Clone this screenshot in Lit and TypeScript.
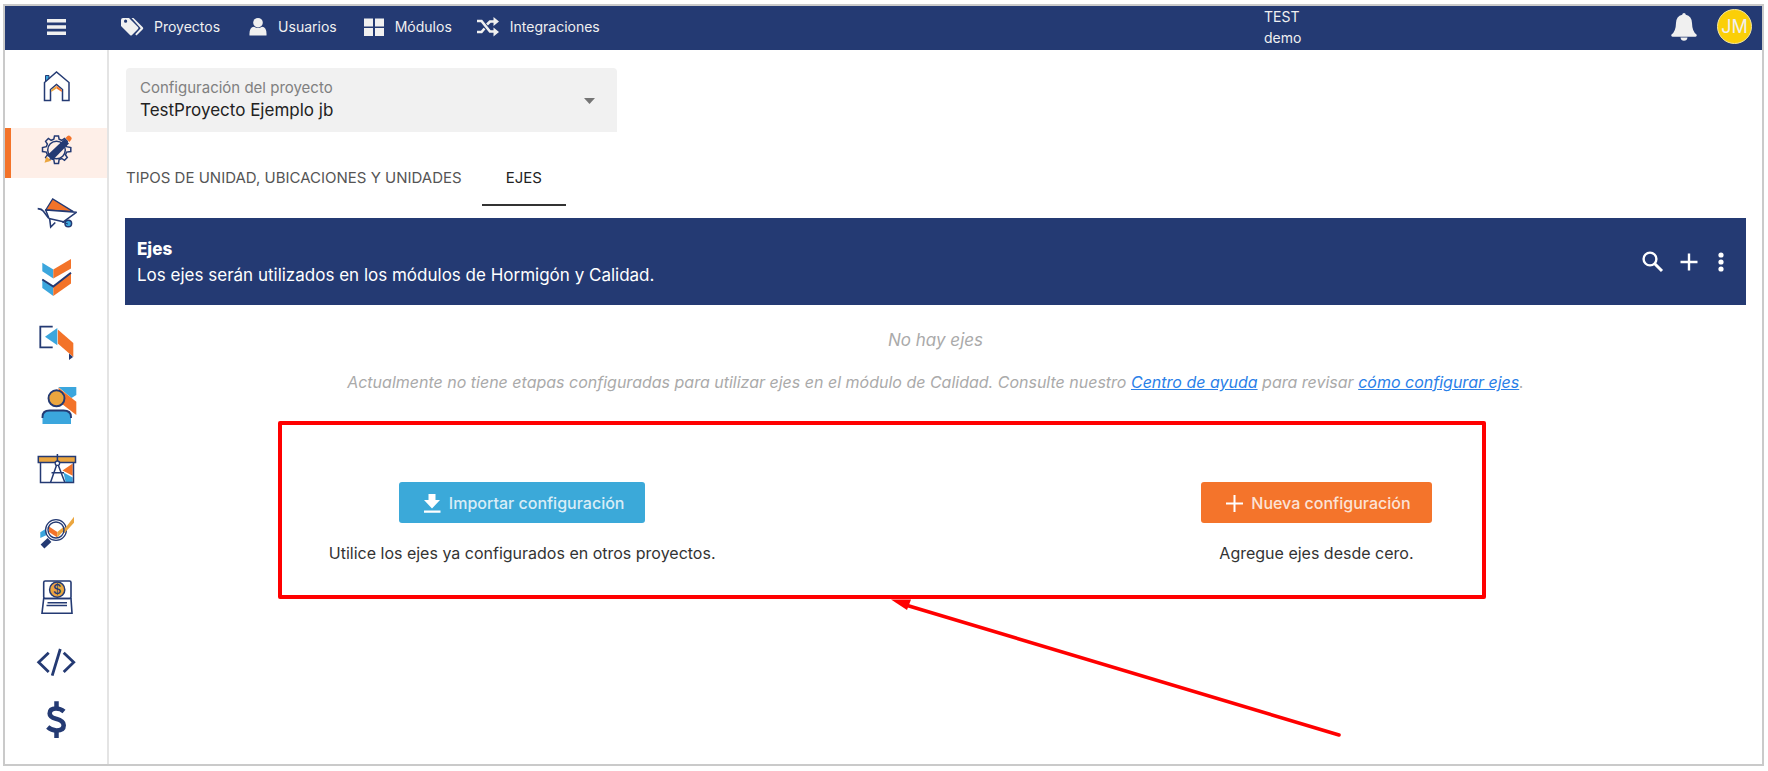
import { LitElement, html, css, svg } from "lit";
import { customElement, state } from "lit/decorators.js";
import { classMap } from "lit/directives/class-map.js";

const NAVY = "#243a73";
const ORANGE = "#f37329";
const BLUE = "#3ba6dd";
const AMBER = "#eba63f";

const modules = [
  {
    name: "Inicio",
    art: svg`
      <path d="M11.500 19V11.500h3.500V16" fill=${BLUE} stroke=${NAVY}/>
      <path d="M10.500 36.500V18.500L22.500 8l12.500 10.500v18h-6.500V25.500L22.500 20.500l-6 5v11z" fill="#fff" stroke=${NAVY} stroke-width="1.500"/>
      <path d="M17.200 26v2l5.300-3.500V21.500z" fill=${AMBER}/>
      <path d="M27.800 26v2l-5.300-3.500V21.500z" fill=${ORANGE}/>`,
  },
  {
    name: "Configuración",
    art: svg`
      <path d="M20.500 8h4l.6 3.200 2.700 1.100 2.700-1.800 2.800 2.800-1.800 2.700 1.100 2.700 4.200.8v4l-4.200.6-1.100 2.700 1.800 2.700-2.800 2.800-2.700-1.800-2.700 1.100-.6 4h-4l-.7-4-2.700-1.100-2.700 1.800-2.800-2.800 1.800-2.700-1.100-2.700-3.800-.6v-4l3.800-.8 1.100-2.700-1.800-2.700 2.800-2.800 2.700 1.800 2.700-1.100z" fill="none" stroke=${NAVY} stroke-width="1.500"/>
      <circle cx="22.500" cy="22" r="8.800" fill="#feefe8" stroke=${NAVY} stroke-width="1.500"/>
      <path d="M30.500 11l4.500 4.500-16.500 16.800-5.500-4.800z" fill=${NAVY}/>
      <path d="M31.500 10l2-2q1.600-1 3 .5l.8.8q1 1.500-.3 2.800l-1.600 1.800z" fill=${ORANGE}/>
      <path d="M12.400 28.500l4.800 4.200-6.700 2z" fill=${AMBER}/>`,
  },
  {
    name: "Hormigón",
    art: svg`
      <path d="M11.700 18L18.700 7l20.600 12.600z" fill=${ORANGE} stroke=${NAVY} stroke-width="1.300"/>
      <path d="M11.700 18l30.600 2.300-13 9.500L15 26.500z" fill="#fff" stroke=${NAVY} stroke-width="1.500" stroke-linejoin="round"/>
      <path d="M3.700 16.600q4 .3 5.500 2.400l5.300 7M15.700 27l1 8 4.600-4.500" fill="none" stroke=${NAVY} stroke-width="1.600"/>
      <circle cx="34.300" cy="31.500" r="3.300" fill=${BLUE} stroke=${NAVY} stroke-width="1.500"/>
      <path d="M28 30l6 2" stroke=${NAVY}/>`,
  },
  {
    name: "Calidad",
    art: svg`
      <path d="M8.300 6.700l11 6.900v8.900l-11-7.200z" fill=${BLUE}/>
      <path d="M37 3v9.500L19.300 22.500v-8.900z" fill=${ORANGE}/>
      <path d="M8.300 23l11 8v9l-11-8z" fill=${BLUE}/>
      <path d="M37 17v10.500L19.300 40v-9z" fill=${ORANGE}/>
      <path d="M8.300 23.500l11 7 17.700-13.700" fill="none" stroke=${NAVY} stroke-width="2"/>`,
  },
  {
    name: "Accesos",
    art: svg`
      <path d="M18.700 6.700H6.300v20.600h12.400" fill="none" stroke=${NAVY} stroke-width="1.800"/>
      <path d="M11 16.700L23.300 8v17.300z" fill=${BLUE}/>
      <path d="M23.800 9.500l15.500 13.500v14L23.800 23.500z" fill=${ORANGE}/>
      <path d="M35 33.500l4 3.500-4 3z" fill=${NAVY}/>`,
  },
  {
    name: "Personal",
    art: svg`
      <path d="M24.300 3h18v8L37.500 14z" fill=${BLUE}/>
      <path d="M24.300 3.500l18 14.200V31L28 20z" fill=${ORANGE}/>
      <circle cx="22.500" cy="14.300" r="8" fill=${AMBER} stroke=${NAVY} stroke-width="1.900"/>
      <path d="M8.500 40v-7q0-6.500 7-6.500h14q7.500 0 7.500 6.500v7z" fill=${BLUE}/>
      <path d="M8.500 34v-1q0-6.500 7-6.500h14q7.500 0 7.500 6.500v1" fill="none" stroke=${NAVY} stroke-width="1.900"/>`,
  },
  {
    name: "Planos",
    art: svg`
      <path d="M38.700 15.500v12.200L28.500 22.500z" fill=${ORANGE}/>
      <path d="M29.500 24.500l9.200 5v5h-7z" fill=${BLUE}/>
      <path d="M6.500 14v20.500h33V14" fill="none" stroke=${NAVY} stroke-width="1.500"/>
      <path d="M4.300 8.500h37.200v6H4.300z" fill=${AMBER} stroke=${NAVY} stroke-width="1.500"/>
      <path d="M23.400 6v7M22.600 17l-6 17.300M24.200 17l6.600 17.300M17.500 24.700h12.500" stroke=${NAVY} stroke-width="1.500"/>
      <circle cx="23.400" cy="15.200" r="2.200" fill="#fff" stroke=${NAVY} stroke-width="1.300"/>`,
  },
  {
    name: "Análisis",
    art: svg`
      <path d="M6.300 20.300l8-5v7l-8 3.700z" fill=${BLUE}/>
      <circle cx="22" cy="18" r="10.400" fill="#fff" stroke=${NAVY} stroke-width="1.300"/>
      <path d="M15 14.500l8.300 5.500v5.500L15 20z" fill=${ORANGE}/>
      <path d="M23.300 20l6.200-5 1.800 1L40 4.700v6L30.500 21l-2-1-5.200 5.500z" fill=${AMBER}/>
      <circle cx="22" cy="18" r="8" fill="none" stroke=${NAVY} stroke-width="1.400"/>
      <path d="M15.500 28l-7 6.500" stroke=${NAVY} stroke-width="5.500"/>`,
  },
  {
    name: "Presupuesto",
    art: svg`
      <rect x="9.700" y="5" width="27.300" height="17.500" rx="1.500" fill="none" stroke=${NAVY} stroke-width="1.600"/>
      <path d="M9.700 22.500H37l1 14.800H8z" fill="none" stroke=${NAVY} stroke-width="1.600"/>
      <path d="M13.500 26.700h19.500M12.500 29.500h20.500" stroke=${NAVY} stroke-width="1.500"/>
      <circle cx="23.200" cy="13.700" r="7.600" fill=${AMBER} stroke=${NAVY} stroke-width="1.500"/>
      <text x="23.200" y="18.200" font-size="13" font-weight="500" text-anchor="middle" fill=${NAVY}>$</text>`,
  },
  {
    name: "API",
    art: svg`
      <path d="M14.700 12.700l-10 9.600 10 9.700M29.700 12.700l10 9.600-10 9.700M26.300 9L18.200 35.700" fill="none" stroke=${NAVY} stroke-width="2.800"/>`,
  },
  {
    name: "Finanzas",
    art: svg`
      <path d="M22.500 3.300V10M22.500 33v7" stroke=${NAVY} stroke-width="4.500"/>
      <path d="M30 13.500q-3.500-3-8-3-6.300 0-6.300 5 0 3.500 6.300 5.300 7.700 2 7.700 6.400 0 5.300-7.200 5.300-5 0-8.800-3.500" fill="none" stroke=${NAVY} stroke-width="4.600"/>`,
  },
];

const topLinks = [
  {
    label: "Proyectos",
    art: svg`<path d="M0 4q0-2 2-2h6l9 9q1 1 0 2l-6 6q-1 1-2 0L0 10zM3 5.200a1.600 1.600 0 1 0 3.200 0a1.600 1.600 0 1 0-3.200 0z" fill-rule="evenodd"/><path d="M10.500 2h2l9.300 9.200q1 1 0 2L15.500 19.500l-1.300-1.300 5.500-6z"/>`,
  },
  {
    label: "Usuarios",
    art: svg`<circle cx="13" cy="6.700" r="4.800"/><path d="M4.500 19.500q-.5-8.500 4.500-8.800 4 2.600 8 0 5 .3 4.500 8.800z"/>`,
  },
  {
    label: "Módulos",
    art: svg`<path d="M2 2.500h9v8H2zM13 2.500h9v8h-9zM2 12h9v8H2zM13 12h9v8h-9z"/>`,
  },
  {
    label: "Integraciones",
    art: svg`<path d="M0 5h4.500L13 15.500h4" fill="none" stroke="#f0f0f0" stroke-width="2.600"/><path d="M0 16h4.500L7.500 12.500M10 8.500L13 5.500h4" fill="none" stroke="#f0f0f0" stroke-width="2.600"/><path d="M16.500 1l5.500 4.500-5.500 4.500zM16.500 11.500l5.500 4.500-5.500 4.500z"/>`,
  },
];

@customElement("app-root")
export class AppRoot extends LitElement {
  @state() private active = 1;
  @state() private tab = 1;

  static styles = css`
    :host {
      display: flex;
      box-sizing: border-box;
      min-height: 100vh;
      padding: 4px 4px 5px 3px;
      background: #fff;
      font-family: Inter, "Open Sans", sans-serif;
      font-size: 16px;
      line-height: 24px;
      color: #333;
    }
    * { box-sizing: border-box; }
    button, select { font: inherit; border: 0; margin: 0; cursor: pointer; }
    button { display: inline-flex; align-items: center; justify-content: center; padding: 0; background: none; color: inherit; }
    a { color: inherit; }
    svg { display: block; flex: none; }
    p, h1, ul { margin: 0; padding: 0; }
    .frame { flex: 1; display: flex; flex-direction: column; border: 2px solid #cacaca; }

    .topbar { display: flex; align-items: center; height: 44px; padding-bottom: 3px; background: #243a73; color: #f0f0f0; fill: #f0f0f0; font-size: 14px; }
    .burger { width: 104px; }
    .links { display: flex; gap: 25px; margin-left: 12px; flex: 1; }
    .link { display: flex; align-items: center; gap: 10px; text-decoration: none; }
    .account { flex: 0 0 498px; display: flex; align-items: center; padding-right: 10px; gap: 20px; }
    .company { flex: 1; line-height: 21px; }
    .avatar { width: 35px; height: 35px; border-radius: 50%; background: #fbcf08; border: 1px solid #f4e6a0; font-size: 18px; }

    .body { flex: 1; display: flex; }
    .side { flex: none; width: 104px; border-right: 2px solid #e4e4e4; }
    .modules { list-style: none; display: flex; flex-direction: column; gap: 14px; padding-top: 14px; }
    .modules li:last-child { margin-top: -6px; }
    .module { display: flex; justify-content: center; height: 50px; border-left: 6px solid transparent; padding-right: 6px; }
    .module.on { background: #feefe8; border-color: #f37329; }

    .main { flex: 1; min-width: 0; padding: 18px 16px 0; }
    .field { position: relative; width: 491px; max-width: 100%; margin-left: 1px; padding: 8px 0; height: 64px; background: #f1f1f1; border-radius: 4px 4px 0 0; }
    .field label { display: block; padding-left: 14px; color: #808080; font-size: 15px; }
    .project { display: block; width: 100%; padding: 0 40px 0 14px; height: 20px; line-height: 20px; appearance: none; background: none; color: #222; font-size: 17px; }
    .caret { position: absolute; right: 22px; top: 30px; pointer-events: none; }

    .tabs { display: flex; gap: 20px; margin: 20px 0 12px 1px; }
    .tab { height: 54px; border-bottom: 2px solid transparent; color: #555; font-size: 15px; }
    .tab + .tab { padding: 0 24px; }
    .tab.on { border-color: #333; color: #222; }

    .banner { display: flex; align-items: center; min-height: 87px; padding: 0 16px 0 12px; background: #243a73; color: #fff; fill: #fff; font-size: 17px; }
    .banner-text { flex: 1; line-height: 26px; }
    .banner h1 { font-size: 17px; font-weight: 800; }
    .tools { display: flex; gap: 12px; }

    .empty { padding-top: 23px; text-align: center; font-style: italic; color: #aaa; }
    .empty-title { font-size: 17px; }
    .empty-note { margin-top: 18px; }
    .empty-note a { color: #2a80e8; }

    .options { position: relative; display: flex; margin-top: 88px; }
    .option { flex: 0 0 49%; display: flex; flex-direction: column; align-items: center; gap: 18px; }
    .cta { height: 41px; padding: 0 21px 0 22px; gap: 6px; border-radius: 3px; color: #fff; fill: #fff; font-weight: 500; }
    .cta span { opacity: 0.8; }
    .import { background: #3ba9d9; }
    .create { background: #f4742b; }
    .mark { position: absolute; left: 153px; right: 260px; top: -61px; bottom: -34px; border: 4px solid #ff0000; border-radius: 2px; pointer-events: none; }
    .pointer { position: absolute; left: 765px; top: 116px; pointer-events: none; }
  `;

  render() {
    return html`
      <div class="frame">
        <header class="topbar">
          <button class="burger" aria-label="Menú">
            <svg width="20" height="16" viewBox="0 0 20 16"><path d="M0 0h19v3.500H0zM0 6.200h19v3.500H0zM0 12.400h19v3.500H0z"/></svg>
          </button>
          <nav class="links">
            ${topLinks.map((l) => html`<a class="link" href="#">
              <svg width="23" height="22" viewBox="0 0 23 22">${l.art}</svg>${l.label}</a>`)}
          </nav>
          <div class="account">
            <div class="company"><div>TEST</div><div>demo</div></div>
            <button aria-label="Notificaciones">
              <svg width="26" height="28" viewBox="0 0 26 28"><path d="M13 0q1.600 0 1.800 1.800 6 1.600 6.200 8.200.2 8.500 4.500 11.500.8 2-1 2.200H1.500q-1.800-.2-1-2.200Q4.800 18.500 5 10q.2-6.600 6.200-8.200Q11.400 0 13 0zM9.500 24.500h7q-.5 3.200-3.500 3.200t-3.500-3.200z"/></svg>
            </button>
            <button class="avatar" aria-label="Cuenta">JM</button>
          </div>
        </header>
        <div class="body">
          <nav class="side">
            <ul class="modules">
              ${modules.map((m, i) => html`<li>
                <a class=${classMap({ module: true, on: this.active === i })} href="#" aria-label=${m.name}
                  @click=${() => (this.active = i)}>
                  <svg width="44" height="44" viewBox="0 0 44 44">${m.art}</svg>
                </a></li>`)}
            </ul>
          </nav>
          <main class="main">
            <div class="field">
              <label for="project">Configuración del proyecto</label>
              <select class="project" id="project"><option>TestProyecto Ejemplo jb</option></select>
              <svg class="caret" width="11" height="6" viewBox="0 0 11 6"><path d="M0 0h11L5.500 6z" fill="#757575"/></svg>
            </div>
            <div class="tabs" role="tablist">
              ${["TIPOS DE UNIDAD, UBICACIONES Y UNIDADES", "EJES"].map((t, i) => html`<button role="tab"
                aria-selected=${this.tab === i} class=${classMap({ tab: true, on: this.tab === i })}
                @click=${() => (this.tab = i)}>${t}</button>`)}
            </div>
            <section class="banner">
              <div class="banner-text">
                <h1>Ejes</h1>
                <p>Los ejes serán utilizados en los módulos de Hormigón y Calidad.</p>
              </div>
              <div class="tools">
                <button aria-label="Buscar"><svg width="24" height="22" viewBox="0 0 24 22"><circle cx="8" cy="8" r="6.400" fill="none" stroke="#fff" stroke-width="2.400"/><path d="M12.500 12.500l7.500 7.500" stroke="#fff" stroke-width="3"/></svg></button>
                <button aria-label="Agregar"><svg width="22" height="22" viewBox="0 0 22 22"><path d="M9.800 2.500h2.400v7.300h7.300v2.400h-7.300v7.300H9.800v-7.300H2.500V9.800h7.300z"/></svg></button>
                <button aria-label="Más opciones"><svg width="18" height="22" viewBox="0 0 18 22"><circle cx="9" cy="4" r="2.600"/><circle cx="9" cy="11" r="2.600"/><circle cx="9" cy="18" r="2.600"/></svg></button>
              </div>
            </section>
            <div class="empty">
              <p class="empty-title">No hay ejes</p>
              <p class="empty-note">Actualmente no tiene etapas configuradas para utilizar ejes en el módulo de Calidad. Consulte nuestro <a href="#">Centro de ayuda</a> para revisar <a href="#">cómo configurar ejes</a>.</p>
            </div>
            <div class="options">
              <div class="option">
                <button class="cta import">
                  <svg width="22" height="22" viewBox="0 0 22 22"><path d="M7.500 2h7v6h4.500l-8 8.500L3 8h4.500zM3 18.500h16.500v2.300H3z"/></svg>
                  <span>Importar configuración</span>
                </button>
                <p>Utilice los ejes ya configurados en otros proyectos.</p>
              </div>
              <div class="option">
                <button class="cta create">
                  <svg width="22" height="22" viewBox="0 0 22 22"><path d="M10.500 3h2v7.500H20v2h-7.500V20h-2v-7.500H3v-2h7.500z"/></svg>
                  <span>Nueva configuración</span>
                </button>
                <p>Agregue ejes desde cero.</p>
              </div>
              <div class="mark"></div>
              <svg class="pointer" width="454" height="142" viewBox="0 0 454 142"><path d="M14 6.500L449 137" stroke="#ff0000" stroke-width="3.600" stroke-linecap="round"/><path d="M1 1.500l20 0-4 10.500z" fill="#ff0000"/></svg>
            </div>
          </main>
        </div>
      </div>
    `;
  }
}
